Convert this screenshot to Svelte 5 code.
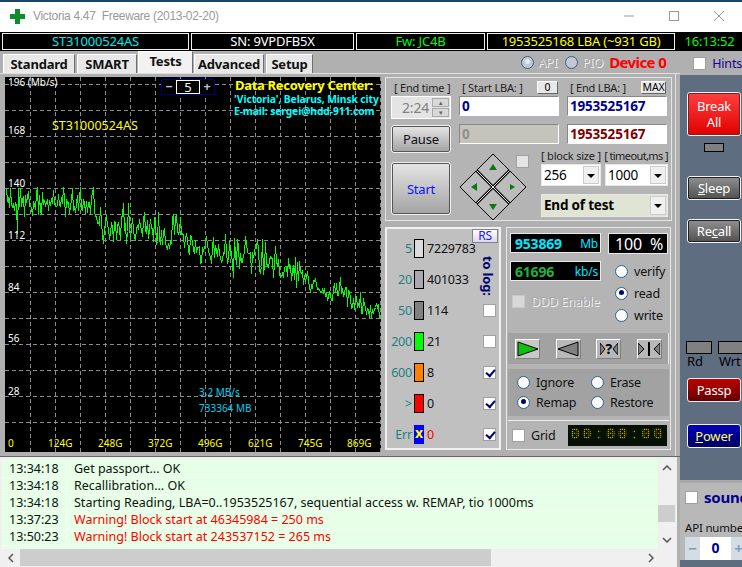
<script>
  const tabs = ["Standard", "SMART", "Tests", "Advanced", "Setup"];
  const info = [
    { text: "ST31000524AS", color: "#00e8e8", width: 187 },
    { text: "SN: 9VPDFB5X", color: "#ffffff", width: 163 },
    { text: "Fw: JC4B", color: "#00ff00", width: 129 },
    { text: "1953525168 LBA (~931 GB)", color: "#ffff00", width: 188 },
  ];
  const yLabels = [
    { y: 9, t: "196 (Mb/s)" }, { y: 57, t: "168" }, { y: 110, t: "140" }, { y: 162, t: "112" },
    { y: 214, t: "84" }, { y: 265, t: "56" }, { y: 318, t: "28" },
  ];
  const xLabels = [
    { x: 3, t: "0" }, { x: 43, t: "124G" }, { x: 93, t: "248G" }, { x: 143, t: "372G" },
    { x: 193, t: "496G" }, { x: 243, t: "621G" }, { x: 293, t: "745G" }, { x: 342, t: "869G" },
  ];
  const counters = [
    { label: "5", color: "#dcdcdc", value: "7229783" },
    { label: "20", color: "#a8a8b0", value: "401033" },
    { label: "50", color: "#808080", value: "114", box: true, on: false },
    { label: "200", color: "#00ff00", value: "21", box: true, on: false },
    { label: "600", color: "#ff8000", value: "8", box: true, on: true },
    { label: ">", color: "#ff0000", value: "0", box: true, on: true },
    { label: "Err", color: "#0000ff", value: "0", box: true, on: true, err: true },
  ];
  const log = [
    { time: "13:34:18", msg: "Get passport... OK" },
    { time: "13:34:18", msg: "Recallibration... OK" },
    { time: "13:34:18", msg: "Starting Reading, LBA=0..1953525167, sequential access w. REMAP, tio 1000ms" },
    { time: "13:37:23", msg: "Warning! Block start at 46345984 = 250 ms", warn: true },
    { time: "13:50:23", msg: "Warning! Block start at 243537152 = 265 ms", warn: true },
  ];

  const gridY = Array.from({ length: 14 }, (_, i) => 7 + i * 26);
  const gridX = Array.from({ length: 15 }, (_, i) => 25 + i * 25);

  // speed curve: rough trend plus seeded spikes, in chart coordinates
  const trend = [[0,126],[88,126],[92,146],[175,156],[195,168],[228,174],[262,181],[295,194],[312,214],[335,214],[352,224],[376,238]];
  const spikes = { 1:111, 5:111, 13:111, 15:111, 32:110, 58:110, 67:111, 75:110, 88:110, 12:156, 98:166, 118:126, 123:126, 167:140, 175:140, 228:200, 260:165, 292:185, 335:200 };
  function trendAt(x) {
    for (let i = 1; i < trend.length; i++) {
      if (x <= trend[i][0]) {
        const [x0, y0] = trend[i - 1], [x1, y1] = trend[i];
        return y0 + ((y1 - y0) * (x - x0)) / (x1 - x0);
      }
    }
    return 238;
  }
  let seed = 4711;
  const rnd = () => (seed = (seed * 16807) % 2147483647) / 2147483647;
  let pts = [];
  for (let x = 1; x < 376; x++) {
    const amp = x < 90 ? 13 : x < 200 ? 19 : x < 300 ? 18 : 11;
    const sign = rnd() < 0.55 ? 1 : -1;
    const off = rnd() < 0.5 ? sign * amp * (0.4 + 0.6 * rnd()) : sign * rnd() * 4;
    const y = Math.round(spikes[x] ?? trendAt(x) + off) + 0.5;
    pts.push(`${x + 0.5},${y}`);
  }
  const curve = pts.join(" ");
</script>

{#snippet radio(label, on = false)}
  <label class="opt"><input type="radio" checked={on} /><span>{label}</span></label>
{/snippet}

<div class="window">
  <header class="titlebar">
    <svg class="logo" width="15" height="15" viewBox="0 0 15 15"><path d="M5 0h5v5h5v5h-5v5H5v-5H0V5h5z" fill="#0a8f2a" /></svg>
    <span class="title">Victoria 4.47&nbsp; Freeware (2013-02-20)</span>
    <div class="controls">
      <svg width="12" height="12" viewBox="0 0 12 12"><path d="M1 6h10" stroke="#999" /></svg>
      <svg width="12" height="12" viewBox="0 0 12 12"><rect x="1.5" y="1.5" width="9" height="9" fill="none" stroke="#999" /></svg>
      <svg width="12" height="12" viewBox="0 0 12 12"><path d="M1 1l10 10M11 1L1 11" stroke="#999" /></svg>
    </div>
  </header>

  <div class="infobar">
    {#each info as cell}
      <div class="cell" style="width:{cell.width}px;color:{cell.color}">{cell.text}</div>
    {/each}
    <div class="clock">16:13:52</div>
  </div>

  <div class="tabrow">
    <div class="tabs">
      {#each tabs as tab}
        <button class="tab tab-{tab.toLowerCase()}" class:active={tab === "Tests"}>{tab}</button>
      {/each}
    </div>
    <div class="mode">
      <label class="opt dim"><input type="radio" class="grey" checked /><span class="emboss">API</span></label>
      <label class="opt dim"><input type="radio" class="grey" /><span class="emboss">PIO</span></label>
      <span class="device">Device 0</span>
    </div>
    <label class="hints"><input type="checkbox" /><span>Hints</span></label>
  </div>

  <div class="body">
    <div class="main">
      <div class="workspace">
        <div class="chart">
          <svg width="376" height="375" viewBox="0 0 376 375">
            <rect width="376" height="375" fill="#000" />
            {#each gridY as y}
              <line x1="0" x2="376" y1={y + 0.5} y2={y + 0.5} class="grid" />
            {/each}
            {#each gridX as x}
              <line y1="0" y2="375" x1={x + 0.5} x2={x + 0.5} class="grid" />
            {/each}
            <polyline points={curve} fill="none" stroke="#00ff00" stroke-width="1" shape-rendering="crispEdges" />
            {#each yLabels as l}
              <text x="3" y={l.y} class="ylab">{l.t}</text>
            {/each}
            {#each xLabels as l}
              <text x={l.x} y="370" class="xlab">{l.t}</text>
            {/each}
            <text x="47" y="53" class="model">ST31000524AS</text>
            <text x="230" y="13" class="drc">Data Recovery Center:</text>
            <text x="229" y="26" class="contact">'Victoria', Belarus, Minsk city</text>
            <text x="229" y="38" class="contact">E-mail: sergei@hdd-911.com</text>
            <text x="194" y="319" class="speed">3,2 MB/s</text>
            <text x="194" y="335" class="speed">733364 MB</text>
          </svg>
          <div class="stepper">
            <span class="pm">−</span><span class="five">5</span><span class="pm">+</span>
          </div>
        </div>

        <div class="right">
          <section class="panel controls-panel">
            <div class="fields">
              <div class="field-head"><span class="lab">[ End time ]</span></div>
              <div class="field-head"><span class="lab">[ Start LBA: ]</span><button class="mini zero">0</button></div>
              <div class="field-head"><span class="lab">[ End LBA: ]</span><button class="mini max">MAX</button></div>

              <div class="spin">
                <span>2:24</span>
                <div class="spin-btns"><i>▴</i><i>▾</i></div>
              </div>
              <div class="input blue">0</div>
              <div class="input blue">1953525167</div>

              <button class="btn pause">Pause</button>
              <div class="input off">0</div>
              <div class="input maroon">1953525167</div>
            </div>

            <div class="lower">
              <button class="btn start">Start</button>
              <svg class="pad" width="68" height="68" viewBox="0 0 68 68">
                <path d="M34 1L67 34 34 67 1 34z" fill="#bcbcbc" stroke="#000" />
                <path d="M17.5 17.5l33 33M50.5 17.5l-33 33" stroke="#000" stroke-width="3" />
                <path d="M17.5 17.5l33 33M50.5 17.5l-33 33" stroke="#e8e8e8" />
                <path d="M34 11l4 6h-8zM34 57l4-6h-8zM12 34l6-4v8zM56 34l-5-3v6z" fill="#0a7a10" />
              </svg>
              <input type="checkbox" class="pad-check" />
              <div class="selects">
                <div class="sel-labels"><span class="lab">[ block size ]</span><span class="lab tight">[ timeout,ms ]</span></div>
                <div class="sel-row">
                  <div class="select s1">256<b></b></div>
                  <div class="select s2">1000<b></b></div>
                </div>
                <div class="select end-test">End of test<b></b></div>
              </div>
            </div>
          </section>

          <div class="bottom">
            <section class="panel counters">
              <button class="rs">RS</button>
              <span class="tolog">to log:</span>
              {#each counters as c}
                <div class="counter">
                  <span class="c-label">{c.label}</span>
                  <span class="c-bar" class:err={c.err} style="background:{c.color}">{c.err ? "x" : ""}</span>
                  <span class="c-val" class:red={c.err}>{c.value}</span>
                  {#if c.box}
                    <input type="checkbox" class="c-check" checked={c.on} />
                  {/if}
                </div>
              {/each}
            </section>

            <section class="panel stats">
              <div class="stat-grid">
                <div class="lcd wide"><b class="cy">953869</b><span class="cy2">Mb</span></div>
                <div class="lcd pct"><span>100</span><span>%</span></div>
                <div class="left-stack">
                  <div class="lcd wide"><b class="gr">61696</b><span class="cy2">kb/s</span></div>
                  <label class="ddd"><input type="checkbox" disabled /><span class="emboss">DDD Enable</span></label>
                </div>
                <div class="rw">
                  {@render radio("verify")}
                  {@render radio("read", true)}
                  {@render radio("write")}
                </div>
              </div>

              <div class="band transport">
                <button class="tbtn sel"><svg width="22" height="16" viewBox="0 0 22 16"><path d="M1 1l20 7-20 7z" fill="#10c010" stroke="#000" /></svg></button>
                <button class="tbtn"><svg width="22" height="16" viewBox="0 0 22 16"><path d="M21 1L1 8l20 7z" fill="#808080" stroke="#000" /></svg></button>
                <button class="tbtn q"><svg width="5" height="14" viewBox="0 0 5 14"><path d="M0 1l5 6-5 6z" fill="#808080" stroke="#000" /></svg><b>?</b><svg width="5" height="14" viewBox="0 0 5 14"><path d="M5 1L0 7l5 6z" fill="#808080" stroke="#000" /></svg></button>
                <button class="tbtn q"><svg width="6" height="14" viewBox="0 0 6 14"><path d="M0 1l6 6-6 6z" fill="#808080" stroke="#000" /></svg><i class="bar"></i><svg width="6" height="14" viewBox="0 0 6 14"><path d="M6 1L0 7l6 6z" fill="#808080" stroke="#000" /></svg></button>
              </div>

              <div class="band actions">
                {@render radio("Ignore")}
                {@render radio("Erase")}
                {@render radio("Remap", true)}
                {@render radio("Restore")}
              </div>

              <div class="foot">
                <label class="opt"><input type="checkbox" /><span>Grid</span></label>
                <div class="led">00:00:00</div>
              </div>
            </section>
          </div>
        </div>
      </div>

      <div class="log">
        <div class="log-view">
          <div class="rows">
            {#each log as row}
              <div class="row" class:warn={row.warn}>
                <span class="time">{row.time}</span><span class="msg">{row.msg}</span>
              </div>
            {/each}
          </div>
          <div class="vscroll">
            <svg width="10" height="6" viewBox="0 0 10 6"><path d="M1 5l4-4 4 4" fill="none" stroke="#555" stroke-width="1.5" /></svg>
            <div class="vthumb"></div>
            <svg width="10" height="6" viewBox="0 0 10 6"><path d="M1 1l4 4 4-4" fill="none" stroke="#555" stroke-width="1.5" /></svg>
          </div>
        </div>
        <div class="hscroll">
          <svg width="6" height="10" viewBox="0 0 6 10"><path d="M5 1L1 5l4 4" fill="none" stroke="#555" stroke-width="1.5" /></svg>
          <div class="htrack"><div class="hthumb"></div></div>
          <svg width="6" height="10" viewBox="0 0 6 10"><path d="M1 1l4 4-4 4" fill="none" stroke="#555" stroke-width="1.5" /></svg>
        </div>
      </div>
    </div>

    <aside class="side">
      <div class="side-top">
        <button class="sbtn break">Break<br />All</button>
        <div class="lamp"></div>
        <button class="sbtn grey sleep"><u>S</u>leep</button>
        <button class="sbtn grey recall">Re<u>c</u>all</button>
        <div class="rdwr">
          <div><i></i><span>Rd</span></div>
          <div><i></i><span>Wrt</span></div>
        </div>
        <button class="sbtn passp">Passp</button>
        <button class="sbtn power"><u>P</u>ower</button>
      </div>
      <div class="sound">
        <label class="sound-check"><input type="checkbox" /><b>sound</b></label>
        <div class="api-lab">API number</div>
        <div class="api"><span>−</span><b>0</b><span>+</span></div>
      </div>
    </aside>
  </div>
</div>

<style>
  :global(body) { margin: 0; background: #b0b0b0; }
  * { box-sizing: border-box; }
  .window {
    width: 742px; height: 567px; overflow: hidden; display: flex; flex-direction: column;
    background: #b0b0b0; color: #000;
    font-family: "Noto Sans", "Liberation Sans", sans-serif; font-size: 12.5px; letter-spacing: -0.2px;
  }
  button { font-family: inherit; padding: 0; cursor: default; letter-spacing: inherit; }
  input { margin: 0; }

  input[type="radio"], input[type="checkbox"] {
    appearance: none; flex: none; background: #fff; position: relative;
  }
  input[type="radio"] {
    width: 13px; height: 13px; border-radius: 50%; border: 1.5px solid #2f5f8f;
  }
  input[type="radio"]:checked::after {
    content: ""; position: absolute; left: 2.5px; top: 2.5px; width: 5px; height: 5px;
    border-radius: 50%; background: #00006e;
  }
  input[type="checkbox"] { width: 13px; height: 13px; border: 1px solid #a0a0a0; }
  input[type="checkbox"]:checked::after {
    content: ""; position: absolute; left: 2px; top: 2px; width: 7px; height: 4px;
    border-left: 2px solid #00006e; border-bottom: 2px solid #00006e; transform: rotate(-50deg);
  }
  input[type="radio"].grey { background: #c4c8d0; border-color: #2f5f8f; }
  input[type="radio"].grey:checked::after { background: #e8e8e8; }

  .opt { display: flex; align-items: center; gap: 6px; color: #111; height: 14px; white-space: nowrap; }

  .titlebar {
    height: 32px; flex: none; background: #fff; border-top: 2px solid #1a4468;
    display: flex; align-items: center; padding-left: 10px;
  }
  .logo { margin-top: -2px; }
  .title { margin-left: 8px; margin-top: -2px; color: #999; font-size: 12px; font-family: "Liberation Sans", sans-serif; letter-spacing: -0.3px; }
  .controls { margin-left: auto; display: flex; gap: 33px; padding-right: 17px; margin-top: -2px; }

  .infobar {
    height: 19px; flex: none; background: #000; display: flex; gap: 2px; padding: 1px 0 0 2px;
  }
  .cell {
    height: 17px; border: 1px solid #f0f0f0; display: flex; align-items: center; justify-content: center;
    font-size: 13px; line-height: 1;
  }
  .clock { flex: 1; color: #00ff00; text-align: center; font-size: 13px; line-height: 16px; }

  .tabrow { height: 22px; flex: none; display: flex; }
  .tabs { display: flex; padding-left: 3px; gap: 1px; align-items: flex-end; }
  .tab {
    height: 19px; border: 1px solid #fff; border-right-color: #707070; border-bottom: none;
    background: #e8e8e8; font-weight: bold; font-size: 13px; color: #111; line-height: 16px;
  }
  .tab.active { height: 22px; background: #f2f2f2; padding-bottom: 3px; }
  .tab-standard { width: 72px; margin-right: 1px; }
  .tab-smart { width: 60px; }
  .tab-tests { width: 55px; }
  .tab-advanced { width: 70px; }
  .tab-setup { width: 47px; margin-left: 1px; }
  .mode { margin-left: 208px; display: flex; align-items: center; gap: 8px; width: 172px; white-space: nowrap; }
  .opt.dim { gap: 4px; }
  .emboss { color: #a8a8a8; text-shadow: 1px 1px 0 #f4f4f4; }
  .device { color: #ff0000; font-weight: bold; font-size: 15px; margin-left: -2px; letter-spacing: -0.6px; }
  .hints { margin-left: 12px; display: flex; align-items: center; gap: 6px; color: #1a0090; margin-top: 2px; white-space: nowrap; }

  .body { flex: 1; display: flex; min-height: 0; }
  .main { width: 680px; flex: none; display: flex; flex-direction: column; }
  .workspace { height: 384px; flex: none; display: flex; border-top: 1px solid #e0e0e0; padding-left: 5px; border-bottom: 1px solid #666; }

  .chart { width: 376px; height: 375px; margin-top: 3px; position: relative; flex: none; letter-spacing: 0; }
  .chart svg { display: block; }
  .grid { stroke: #8c8c8c; stroke-width: 1; stroke-dasharray: 4 3; }
  .ylab { fill: #fff; font-size: 10px; }
  .xlab { fill: #ffff00; font-size: 10px; }
  .model { fill: #ffff00; font-size: 12.5px; }
  .drc { fill: #ffff00; font-size: 13px; font-weight: bold; letter-spacing: -0.3px; }
  .contact { fill: #00ffff; font-size: 10.3px; font-weight: bold; letter-spacing: -0.1px; }
  .speed { fill: #00d0f0; font-size: 10px; }
  .stepper {
    position: absolute; left: 156px; top: 2px; width: 54px; height: 16px; display: flex;
    border: 1px solid #000080; background: #000;
  }
  .pm { flex: 1; color: #c0c0d8; font-weight: bold; text-align: center; line-height: 13px; }
  .five { width: 24px; border: 1px solid #fff; color: #fff; text-align: center; line-height: 12px; background: #000; font-size: 13px; }

  .right {
    margin-left: 3px; width: 292px; padding: 3px 3px 3px 1px; display: flex; flex-direction: column; gap: 6px;
    border-right: 1px solid #e0e0e0;
  }
  .panel { border: 1px solid #e8e8e8; }
  .controls-panel { height: 144px; padding: 2px 3px 0 5px; background: #b4b4b4; border-color: #e4e4e4; }
  .fields {
    display: grid; grid-template-columns: 60px 100px 100px; column-gap: 8px; row-gap: 0;
    grid-template-rows: 15px 29px 30px;
  }
  .field-head { display: flex; justify-content: space-between; align-items: center; padding: 0 1px 0 3px; }
  .lab { font-size: 11px; line-height: 14px; color: #222; white-space: nowrap; }
  .lab.tight { letter-spacing: -0.6px; }
  .mini {
    height: 13px; background: #e8e8e8; border: 1px solid #fff; border-color: #fff #666 #666 #fff;
    font-size: 10.5px; line-height: 1;
  }
  .zero { width: 21px; }
  .max { width: 25px; }
  .spin {
    height: 23px; background: #e4e4e4; border: 1px solid #fff; margin-top: 1px;
    display: flex; align-items: center; justify-content: flex-end; gap: 3px; color: #808080; font-size: 14px; padding-right: 1px;
  }
  .spin-btns { display: flex; flex-direction: column; width: 17px; gap: 1px; }
  .spin-btns i { height: 9px; background: #d8d8d8; border: 1px solid #aaa; font-size: 7px; line-height: 7px; text-align: center; font-style: normal; color: #666; }
  .input {
    height: 20px; background: #fff; border: 1px solid #666; border-color: #888 #fff #fff #888;
    padding-left: 2px; font-weight: bold; font-size: 13.5px; line-height: 18px; margin-top: 1px;
  }
  .input.blue { color: #00008b; }
  .input.maroon { color: #800000; }
  .input.off { background: #c4c4bc; color: #909090; margin-top: 0; }
  .input.off + .input { margin-top: 0; }
  .btn {
    border: 1px solid #555; border-radius: 2px; outline: 1px solid #f0f0f0;
    background: linear-gradient(#e4e4e4, #a4a4a4); font-size: 13px;
  }
  .pause { width: 58px; height: 26px; margin: 2px 0 0 1px; color: #111; }
  .lower { display: flex; align-items: flex-start; }
  .start { width: 58px; height: 51px; margin: 9px 0 0 1px; color: #1010ff; }
  .pad { margin: -1px 0 0 9px; flex: none; }
  input.pad-check { margin: 1px 0 0 -11px; background: #e4e4e4; }
  .selects { margin: -5px 0 0 12px; width: 127px; }
  .sel-labels { display: flex; justify-content: space-between; }
  .sel-row { display: flex; justify-content: space-between; margin-top: 1px; }
  .select {
    height: 22px; background: #fff; border: 1px solid #e8e8e8; position: relative;
    font-size: 13.5px; line-height: 20px; padding-left: 2px;
  }
  .select b {
    position: absolute; right: 1px; top: 1px; bottom: 1px; width: 16px; background: #f0f0f0;
    border: 1px solid #ccc;
  }
  .select b::after {
    content: ""; position: absolute; left: 3px; top: 7px;
    border: 4px solid transparent; border-top: 4px solid #000; border-bottom: 0;
  }
  .s1 { width: 60px; }
  .s2 { width: 63px; }
  .end-test { margin-top: 8px; background: #e0e4d4; font-weight: bold; height: 23px; }

  .bottom { display: flex; gap: 5px; height: 223px; }
  .counters {
    width: 116px; background: #c0c0c0; border-color: #f0f0f0; border-width: 2px; position: relative; padding: 4px 0 0 0;
  }
  .rs {
    position: absolute; right: 1px; top: 0; width: 26px; height: 14px; background: linear-gradient(#fff, #d8d8e8);
    border: 1px solid #808090; color: #2020f0; font-size: 12px; line-height: 1;
  }
  .tolog {
    position: absolute; left: 93px; top: 27px; writing-mode: vertical-rl; color: #000070; font-weight: bold; font-size: 13px; line-height: 16px;
  }
  .counter { display: flex; align-items: center; height: 31px; }
  .c-label { width: 25px; text-align: right; color: #208080; }
  .c-bar {
    width: 10px; height: 19px; border: 1px solid #000; margin: 0 3px 0 2px; flex: none;
    color: #ffff00; font-weight: bold; text-align: center; line-height: 16px; font-size: 14px;
  }
  .c-bar.err { border: none; }
  .c-val { color: #111; }
  .c-val.red { color: #ff0000; }
  input.c-check { margin-left: auto; margin-right: 3px; }

  .stats { width: 165px; background: #b4b4b4; border-color: #e8e8e8; padding: 5px 1px 0; }
  .stat-grid { display: grid; grid-template-columns: 91px 1fr; grid-template-rows: 21px 1fr; column-gap: 7px; padding-left: 2px; height: 98px; }
  .lcd {
    background: #000; border: 1px solid #e8e8e8; height: 20px; display: flex; justify-content: space-between; align-items: center;
    padding: 0 2px 0 4px; font-size: 12px;
  }
  .lcd.pct { width: 60px; color: #fff; font-size: 16px; height: 21px; padding: 0 4px 0 6px; }
  .cy { color: #00e8ff; font-size: 14px; }
  .gr { color: #20b040; font-size: 14px; }
  .cy2 { color: #00e8ff; }
  .left-stack { margin-top: 7px; }
  .ddd { display: flex; align-items: center; gap: 6px; margin: 12px 0 0 2px; white-space: nowrap; }
  .ddd input { background: #d8d8d8; border-color: #c8c8c8; }
  .rw { display: flex; flex-direction: column; gap: 8px; margin-top: 10px; padding-left: 7px; }
  .band { background: #a2a2a2; }
  .transport {
    margin-top: 2px; height: 31px; display: flex; justify-content: space-between; align-items: center;
    padding: 0 6px 0 7px; border-right: 1px solid #e8e8e8;
  }
  .tbtn {
    width: 25px; height: 20px; background: #b8b8b8; border: 1px solid #fff; border-color: #fff #808080 #808080 #fff;
    display: flex; align-items: center; justify-content: center; gap: 1px;
  }
  .tbtn.sel { background: #c8c8c8; }
  .tbtn b { font-size: 14px; line-height: 1; }
  .tbtn .bar { width: 2px; height: 14px; background: #000; margin: 0 3px; }
  .actions {
    margin-top: 5px; height: 47px; display: grid; grid-template-columns: 74px 1fr; grid-auto-rows: 14px; padding: 6px 0 0 9px; row-gap: 6px;
  }
  .foot {
    margin-top: 4px; border-top: 1px solid #f0f0f0; height: 26px; display: flex; align-items: center; padding: 3px 2px 0 4px; justify-content: space-between;
  }
  .led {
    width: 99px; height: 21px; background: #061006; color: #b8a600; position: relative; overflow: hidden;
    font-family: "Liberation Mono", monospace; font-weight: bold; font-size: 16px; line-height: 21px; text-align: center; letter-spacing: 2.2px;
  }
  .led::after {
    content: ""; position: absolute; inset: 0;
    background: repeating-linear-gradient(90deg, transparent 0 1px, #061006bb 1px 2px), repeating-linear-gradient(0deg, transparent 0 1px, #061006bb 1px 2px);
  }

  .log { flex: 1; min-height: 0; margin-right: 3px; padding: 2px 2px 0 2px; background: #f0f0f0; font-size: 12.5px; letter-spacing: 0; }
  .log-view { display: flex; height: 90px; }
  .rows { flex: 1; background: #e6ffe6; padding-top: 2px; }
  .row { height: 17px; display: flex; border-bottom: 1px solid #f2fff2; line-height: 16px; }
  .time { width: 65px; padding-left: 7px; color: #111; border-right: 1px solid #f2fff2; }
  .msg { padding-left: 7px; color: #111; }
  .warn .msg { color: #ff0000; }
  .vscroll { width: 17px; background: #f0f0f0; display: flex; flex-direction: column; align-items: center; position: relative; padding-top: 6px; }
  .vthumb { position: absolute; top: 46px; left: 0; width: 17px; height: 17px; background: #cdcdcd; }
  .vscroll svg:last-child { position: absolute; bottom: 6px; }
  .hscroll { height: 17px; display: flex; align-items: center; padding: 0 4px 0 6px; margin-right: 17px; }
  .htrack { flex: 1; height: 17px; margin: 0 6px; }
  .hthumb { width: 471px; height: 17px; background: #cdcdcd; }

  .side {
    flex: 1; background: #5f6d80; display: flex; flex-direction: column; overflow: hidden; border-top: 2px solid #b0b0b0;
  }
  .side-top { height: 405px; padding: 17px 0 0 7px; flex: none; }
  .sbtn {
    display: block; width: 54px; height: 24px; border: 1px solid #f4f4f4; border-radius: 3px; color: #fff; font-size: 13px; line-height: 1.25;
  }
  .sbtn.break { height: 44px; background: linear-gradient(#ff4040, #e00000); outline: 1px solid #802020; outline-offset: -2px; }
  .lamp { width: 20px; height: 9px; background: #808080; border: 1px solid #000; margin: 7px 0 0 17px; }
  .sbtn.grey { background: linear-gradient(#909090, #505050); outline: 1px solid #222; outline-offset: -2px; }
  .sleep { margin-top: 24px; }
  .recall { margin-top: 19px; }
  .rdwr { display: flex; gap: 6px; margin-top: 98px; margin-left: -1px; }
  .rdwr div { width: 26px; flex: none; }
  .rdwr i { display: block; height: 13px; background: #808080; border: 1px solid #000; }
  .rdwr span { color: #000; font-size: 13px; line-height: 15px; display: block; padding-left: 1px; }
  .passp { margin-top: 9px; background: linear-gradient(#c00000, #600000); }
  .power { margin-top: 22px; background: linear-gradient(#0000c0, #000060); color: #ffff60; }
  .sound { height: 80px; background: #b8b8b8; border-top: 3px solid #a8a8a8; padding: 7px 0 0 5px; overflow: hidden; white-space: nowrap; }
  .sound-check { display: flex; align-items: center; gap: 6px; color: #00008b; font-size: 15px; height: 14px; }
  .api-lab { font-size: 11.5px; line-height: 14px; margin-top: 17px; color: #111; }
  .api { display: flex; width: 70px; height: 23px; margin-top: 2px; background: #d4dce4; }
  .api span { width: 15px; text-align: center; color: #80a0c0; font-weight: bold; font-size: 15px; line-height: 22px; }
  .api b { width: 31px; background: #fff; color: #00008b; text-align: center; font-size: 14px; line-height: 22px; }
</style>
